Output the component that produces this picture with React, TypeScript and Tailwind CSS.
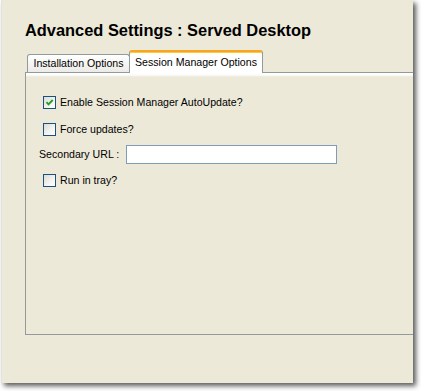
import React from "react";

function CheckBox({ checked }: { checked?: boolean }) {
  return (
    <div className="w-[13px] h-[13px] shrink-0 border border-[#1c5180] bg-[linear-gradient(135deg,#dcdcd7_0%,#f4f4f0_60%,#ffffff_100%)] flex items-center justify-center">
      {checked && (
        <svg width="11" height="11" viewBox="0 0 11 11">
          <path d="M2.5 5.2 L4.5 7.3 L8.7 3" fill="none" stroke="#21a121" strokeWidth="1.9" />
        </svg>
      )}
    </div>
  );
}

function CheckRow({ label, checked }: { label: string; checked?: boolean }) {
  return (
    <div className="flex items-center gap-[4px] pl-[17px] h-[13px]">
      <CheckBox checked={checked} />
      <span className="text-[10.6px] leading-none text-black">{label}</span>
    </div>
  );
}

export default function App() {
  return (
    <div className="w-[421px] h-[391px] bg-white font-['Liberation_Sans',Arial,sans-serif]">
      <div className="ml-[1px] w-[412px] h-[383px] bg-[#ece9d8] border-l border-[#e2e2e2] shadow-[3px_3px_5px_rgba(0,0,0,0.65)] overflow-hidden pl-[23px]">
        {/* Title */}
        <h1 className="pt-[22px] text-[16.4px] leading-[17px] font-bold text-black">
          Advanced Settings : Served Desktop
        </h1>

        {/* Tabs */}
        <div className="mt-[11px] flex items-end pl-[2px] h-[22px]">
          <div className="h-[18px] w-[103px] flex items-center justify-center border border-b-0 border-[#919b9c] rounded-t-[3px] bg-[linear-gradient(#ffffff,#ecebe6)] text-[10.6px] text-black">
            Installation Options
          </div>
          <div className="relative z-10 -ml-px -mb-px h-[23px] w-[134px] flex justify-center items-start pt-[3px] border-x border-[#919b9c] border-t-[2px] border-t-[#f5a623] rounded-t-[3px] bg-white text-[10.6px] text-black shadow-[inset_0_1px_0_#ffc83c]">
            Session Manager Options
          </div>
        </div>

        {/* Pane */}
        <div className="h-[263px] border-t border-l border-b border-[#919b9c] bg-[linear-gradient(#ffffff_0px,#fcfcfa_2px,#ece9d8_4px)]">
          <div className="pt-[23px] flex flex-col">
            <CheckRow label="Enable Session Manager AutoUpdate?" checked />
            <div className="mt-[14px]">
              <CheckRow label="Force updates?" />
            </div>
            <div className="mt-[9px] flex items-center pl-[13px] h-[19px]">
              <span className="text-[10.6px] leading-none text-black w-[87px]">Secondary URL :</span>
              <div className="w-[211px] h-[19px] border border-[#7f9db9] bg-white" />
            </div>
            <div className="mt-[10px]">
              <CheckRow label="Run in tray?" />
            </div>
          </div>
        </div>
      </div>
    </div>
  );
}
